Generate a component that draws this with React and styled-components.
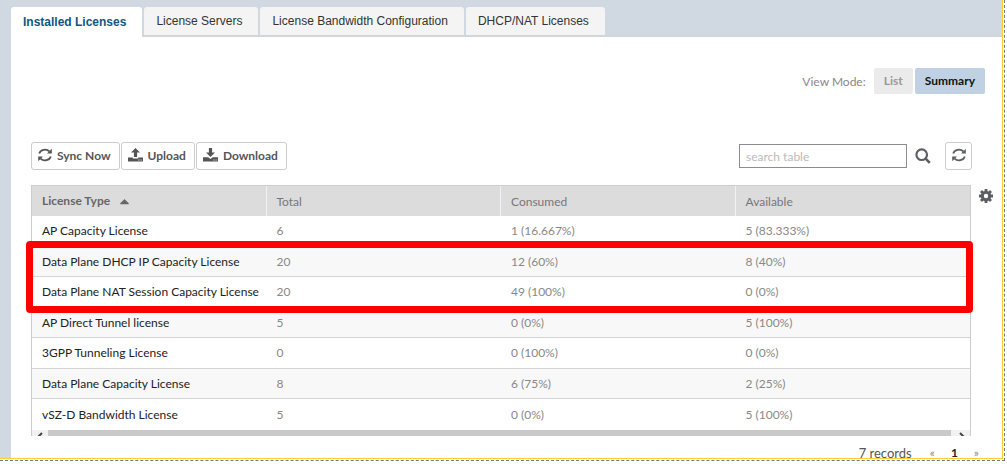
import React, { useState } from "react";
import styled, { createGlobalStyle } from "styled-components";
import { FaCaretUp } from "react-icons/fa";

const tabs = [
  "Installed Licenses",
  "License Servers",
  "License Bandwidth Configuration",
  "DHCP/NAT Licenses",
];

const licenses = [
  { type: "AP Capacity License", total: "6", consumed: "1 (16.667%)", available: "5 (83.333%)" },
  { type: "Data Plane DHCP IP Capacity License", total: "20", consumed: "12 (60%)", available: "8 (40%)" },
  { type: "Data Plane NAT Session Capacity License", total: "20", consumed: "49 (100%)", available: "0 (0%)" },
  { type: "AP Direct Tunnel license", total: "5", consumed: "0 (0%)", available: "5 (100%)" },
  { type: "3GPP Tunneling License", total: "0", consumed: "0 (100%)", available: "0 (0%)" },
  { type: "Data Plane Capacity License", total: "8", consumed: "6 (75%)", available: "2 (25%)" },
  { type: "vSZ-D Bandwidth License", total: "5", consumed: "0 (0%)", available: "5 (100%)" },
];

const RefreshIcon = () => (
  <svg width="14" height="14" viewBox="0 0 14 14" fill="none" stroke="currentColor" strokeWidth="1.8">
    <path d="M1.2 5.6A6 5.4 0 0 1 11.4 3.4" />
    <path d="M12.8 8.4A6 5.4 0 0 1 2.6 10.6" />
    <path d="M13.8 0.8V5.6H9Z" fill="currentColor" stroke="none" />
    <path d="M0.2 13.2V8.4H5Z" fill="currentColor" stroke="none" />
  </svg>
);

const UploadIcon = () => (
  <svg width="15" height="14" viewBox="0 0 15 14" fill="currentColor">
    <path d="M7.5 0L12 4.6H9.1V9H5.9V4.6H3Z" />
    <path d="M0 9.6H4.8V10.6H10.2V9.6H15V13.4H0ZM10.4 11.6V12.4H11.4V11.6ZM12.6 11.6V12.4H13.6V11.6Z" fillRule="evenodd" />
  </svg>
);

const DownloadIcon = () => (
  <svg width="15" height="14" viewBox="0 0 15 14" fill="currentColor">
    <path d="M7.5 9L3 4.4H5.9V0H9.1V4.4H12Z" />
    <path d="M0 9.2H5.2L7.5 11L9.8 9.2H15V13.4H0ZM10.4 11.6V12.4H11.4V11.6ZM12.6 11.6V12.4H13.6V11.6Z" fillRule="evenodd" />
  </svg>
);

const SearchIcon = () => (
  <svg width="16" height="16" viewBox="0 0 16 16" fill="none" stroke="currentColor">
    <circle cx="6.7" cy="6.7" r="5.3" strokeWidth="2.2" />
    <path d="M10.6 10.6L14.8 14.8" strokeWidth="2.6" />
  </svg>
);

const GearIcon = () => (
  <svg width="14" height="14" viewBox="0 0 14 14" fill="none" stroke="currentColor">
    <circle cx="7" cy="7" r="3.7" strokeWidth="3" />
    <path d="M7 0V2.6M7 11.4V14M0 7H2.6M11.4 7H14M2 2L3.9 3.9M10.1 10.1L12 12M2 12L3.9 10.1M10.1 3.9L12 2" strokeWidth="2.8" />
  </svg>
);

function App() {
  const [activeTab, setActiveTab] = useState(tabs[0]);
  const [mode, setMode] = useState("Summary");
  const [searchTerm, setSearchTerm] = useState("");

  const rows = licenses.filter((license) =>
    license.type.toLowerCase().includes(searchTerm.toLowerCase())
  );

  return (
    <Frame>
      <GlobalStyle />
      <Page>
        <TabBar>
          {tabs.map((tab) => (
            <Tab key={tab} $active={tab === activeTab} onClick={() => setActiveTab(tab)}>
              {tab}
            </Tab>
          ))}
        </TabBar>
        <Panel>
          <ViewMode>
            <span>View Mode:</span>
            <ModeGroup>
              {["List", "Summary"].map((name) => (
                <ModeButton key={name} $active={name === mode} onClick={() => setMode(name)}>
                  {name}
                </ModeButton>
              ))}
            </ModeGroup>
          </ViewMode>
          <Toolbar>
            <ToolButton>
              <RefreshIcon />
              Sync Now
            </ToolButton>
            <ToolButton>
              <UploadIcon />
              Upload
            </ToolButton>
            <ToolButton>
              <DownloadIcon />
              Download
            </ToolButton>
            <Search>
              <SearchInput
                aria-label="search table"
                placeholder="search table"
                value={searchTerm}
                onChange={(e) => setSearchTerm(e.target.value)}
              />
              <IconButton aria-label="Search">
                <SearchIcon />
              </IconButton>
              <SquareButton aria-label="Refresh">
                <RefreshIcon />
              </SquareButton>
            </Search>
          </Toolbar>
          <Grid>
            <GridBody>
              <Table>
                <thead>
                  <tr>
                    <HeadCell $sorted>
                      License Type <FaCaretUp size={15} />
                    </HeadCell>
                    <HeadCell>Total</HeadCell>
                    <HeadCell>Consumed</HeadCell>
                    <HeadCell>Available</HeadCell>
                  </tr>
                </thead>
                <tbody>
                  {rows.map((license) => (
                    <Row key={license.type}>
                      <Cell $main>{license.type}</Cell>
                      <Cell>{license.total}</Cell>
                      <Cell>{license.consumed}</Cell>
                      <Cell>{license.available}</Cell>
                    </Row>
                  ))}
                </tbody>
              </Table>
              <ScrollBar>
                <ScrollArrow>
                  <path d="M10 3L6 7L10 11" />
                </ScrollArrow>
                <ScrollThumb />
                <ScrollArrow>
                  <path d="M6 3L10 7L6 11" />
                </ScrollArrow>
              </ScrollBar>
              <Highlight />
            </GridBody>
            <IconButton aria-label="Table settings">
              <GearIcon />
            </IconButton>
          </Grid>
          <Footer>
            <Records>{rows.length} records</Records>
            <PageLink href="#">«</PageLink>
            <PageLink href="#" $current>
              1
            </PageLink>
            <PageLink href="#">»</PageLink>
          </Footer>
        </Panel>
      </Page>
    </Frame>
  );
}

const GlobalStyle = createGlobalStyle`
  * {
    box-sizing: border-box;
  }
  body {
    margin: 0;
    background: #fff;
    color: #737373;
    font-family: Lato, "Open Sans", sans-serif;
    font-size: 12px;
  }
  button, input {
    font: inherit;
  }
  button {
    cursor: pointer;
  }
`;

const Frame = styled.div`
  margin-right: 2px;
  padding: 0 1px 1px 0;
  border: 1px dashed #777;
  border-width: 0 1px 1px 0;
`;

const Page = styled.div`
  padding: 7px 0 0 11px;
  background: #d0d8e2;
  border: 1px solid #ffcc33;
  border-width: 0 1px 1px 0;
`;

const TabBar = styled.div`
  display: flex;
  align-items: flex-start;
  gap: 2px;
  height: 30px;
  background: linear-gradient(#d2d5da, #d2d5da) bottom / 100% 2px no-repeat;
`;

const Tab = styled.button`
  height: ${(props) => (props.$active ? "30px" : "28px")};
  padding: 0 16px 0 12px;
  border: 0;
  border-radius: 3px 3px 0 0;
  background: ${(props) => (props.$active ? "#fff" : "#f4f4f4")};
  color: ${(props) => (props.$active ? "#12567f" : "#333")};
  font-family: "Liberation Sans", Arial, sans-serif;
  font-size: 12px;
  font-weight: ${(props) => (props.$active ? "bold" : "normal")};
  white-space: nowrap;
`;

const Panel = styled.div`
  padding: 31px 5px 0 20px;
  background: #fff;
`;

const ViewMode = styled.div`
  display: flex;
  justify-content: flex-end;
  align-items: center;
  gap: 8px;
  margin: 0 12px 48px 0;
  color: #888;
`;

const ModeGroup = styled.div`
  display: flex;
  gap: 2px;
`;

const ModeButton = styled.button`
  height: 26px;
  padding: 0 10px 2px;
  border: 0;
  border-radius: 2px;
  background: ${(props) => (props.$active ? "#c0d1e3" : "#ebebeb")};
  color: ${(props) => (props.$active ? "#111" : "#999")};
  font-weight: bold;
`;

const Toolbar = styled.div`
  display: flex;
  align-items: center;
  gap: 1px;
  margin-bottom: 15px;
`;

const ToolButton = styled.button`
  display: flex;
  align-items: center;
  gap: 5px;
  height: 28px;
  padding: 0 8px 2px 6px;
  border: 1px solid #ccc;
  border-radius: 3px;
  background: #fff;
  color: #555;
  font-weight: bold;
`;

const Search = styled.div`
  display: flex;
  align-items: center;
  gap: 8px;
  margin: 0 25px 0 auto;
`;

const SearchInput = styled.input`
  width: 168px;
  height: 24px;
  padding: 0 6px;
  border: 1px solid #8c8c91;
  outline: 0;

  &::placeholder {
    color: #bbb;
  }
`;

const IconButton = styled.button`
  display: flex;
  padding: 0;
  border: 0;
  background: none;
  color: #5b5f63;
`;

const SquareButton = styled(IconButton)`
  justify-content: center;
  align-items: center;
  width: 27px;
  height: 28px;
  margin-left: 6px;
  padding-bottom: 2px;
  border: 1px solid #ccc;
  border-radius: 3px;
`;

const Grid = styled.div`
  display: flex;
  align-items: flex-start;
  gap: 8px;

  > ${IconButton} {
    margin: 4px 4px 0 0;
  }
`;

const GridBody = styled.div`
  position: relative;
  flex: 1;
  border: 1px solid #ccccd8;
  border-bottom: 0;
`;

const Table = styled.table`
  width: 100%;
  table-layout: fixed;
  border-collapse: separate;
  border-spacing: 0;
`;

const HeadCell = styled.th`
  height: 30px;
  padding: 0 10px;
  border-right: 1px solid #f2f2f2;
  background: #dcdcdc;
  color: ${(props) => (props.$sorted ? "#666" : "#777")};
  font-weight: ${(props) => (props.$sorted ? "bold" : "normal")};
  text-align: left;

  &:last-child {
    border-right: 0;
  }
  svg {
    margin-left: 4px;
    vertical-align: middle;
  }
`;

const Row = styled.tr`
  height: 31px;

  &:nth-child(even) {
    height: 30px;
    background: #f8f8f8;
  }
`;

const Cell = styled.td`
  padding: 0 10px 1px;
  border-bottom: 1px solid #d4d4d4;
  color: ${(props) => (props.$main ? "#222" : "#888")};
  white-space: nowrap;

  ${Row}:last-child & {
    border-bottom: 0;
  }
`;

const ScrollBar = styled.div`
  display: flex;
  height: 6px;
  overflow: hidden;
  background: #f1f1f1;
`;

const ScrollArrow = styled.svg.attrs({ viewBox: "0 0 16 14" })`
  width: 16px;
  height: 14px;
  fill: none;
  stroke: #444;
  stroke-width: 2;
`;

const ScrollThumb = styled.div`
  flex: 1;
  margin-right: 3px;
  background: #c9c9c9;
`;

/* marks the DHCP and NAT rows */
const Highlight = styled.div`
  position: absolute;
  top: 55px;
  left: -6px;
  right: -3px;
  height: 72px;
  border: 7px solid #f00;
  border-radius: 4px;
  pointer-events: none;
`;

const Footer = styled.div`
  display: flex;
  justify-content: flex-end;
  align-items: center;
  gap: 16px;
  height: 22px;
  padding: 12px 18px 0 0;
  color: #555;
  line-height: 12px;
`;

const Records = styled.span`
  margin-right: 2px;
  font-size: 13px;
`;

const PageLink = styled.a`
  color: ${(props) => (props.$current ? "#222" : "#888")};
  font-weight: ${(props) => (props.$current ? "bold" : "normal")};
  text-decoration: none;
`;

export default App;
